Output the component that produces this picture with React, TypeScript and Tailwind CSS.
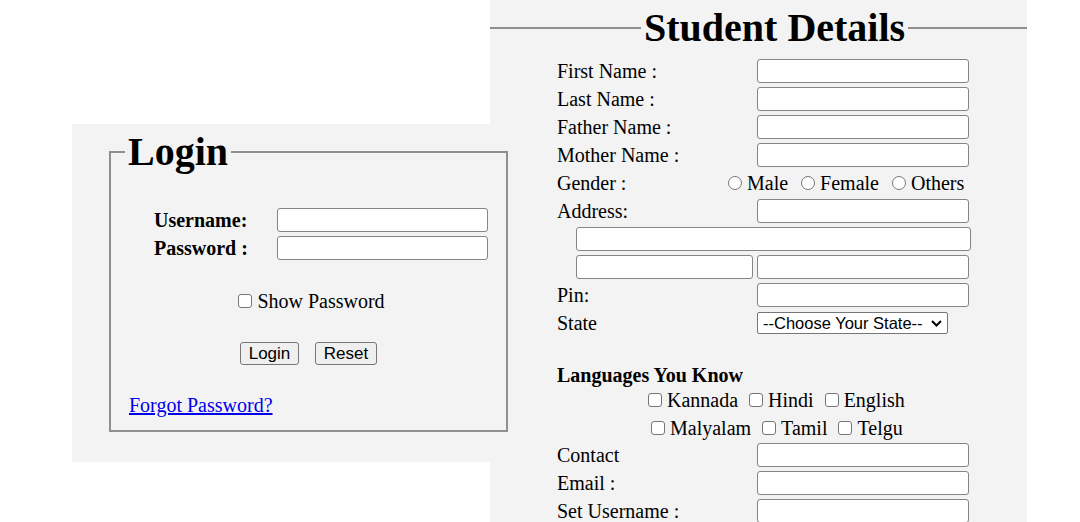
import React from 'react'

const serif = "font-['Liberation_Serif',serif]"
const sans = "font-['Liberation_Sans',Arial,sans-serif]"

function Input({ w = 'w-[212px]' }: { w?: string }) {
  return <div className={`${w} h-[24px] shrink-0 rounded-[3px] border border-[#858585] bg-white`} />
}

function Box({ round }: { round?: boolean }) {
  return (
    <span
      className={`inline-block w-[14px] h-[14px] shrink-0 border border-[#767676] bg-white ${
        round ? 'rounded-full' : 'rounded-[3px]'
      }`}
    />
  )
}

function Choice({ label, round }: { label: string; round?: boolean }) {
  return (
    <span className="flex items-center gap-[5px]">
      <Box round={round} />
      <span>{label}</span>
    </span>
  )
}

function Row({ label, children }: { label: string; children?: React.ReactNode }) {
  return (
    <div className="flex h-[24px] items-center">
      <span className="w-[200px] shrink-0">{label}</span>
      {children}
    </div>
  )
}

function Button({ children, w }: { children: React.ReactNode; w: string }) {
  return (
    <button
      className={`${sans} ${w} h-[23px] rounded-[3px] border border-[#767676] bg-[#efefef] text-[17px] leading-none text-black`}
    >
      {children}
    </button>
  )
}

function LoginPanel() {
  return (
    <div className={`${serif} relative z-10 mt-[124px] h-[338px] w-[436px] shrink-0 bg-[#f3f3f3] pl-[37px] pt-[5px] text-[20px] text-black`}>
      <fieldset className="h-[303px] w-[399px] border-2 border-[#8f8f8f]">
        <legend className="ml-[14px] px-[3px] text-[40px] font-bold leading-[46px]">Login</legend>
        <div className="mt-[33px] flex flex-col gap-[4px] pl-[43px]">
          <div className="flex h-[24px] items-center">
            <span className="w-[123px] font-bold">Username:</span>
            <Input w="w-[211px]" />
          </div>
          <div className="flex h-[24px] items-center">
            <span className="w-[123px] font-bold">Password :</span>
            <Input w="w-[211px]" />
          </div>
        </div>
        <div className="mt-[29px] flex h-[24px] items-center justify-center pl-[6px]">
          <Choice label="Show Password" />
        </div>
        <div className="mt-[29px] flex justify-center gap-[16px]">
          <Button w="w-[59px]">Login</Button>
          <Button w="w-[62px]">Reset</Button>
        </div>
        <div className="mt-[28px] h-[24px] pl-[18px] leading-[24px]">
          <a href="#" className="text-[#0000ee] underline">
            Forgot Password?
          </a>
        </div>
      </fieldset>
    </div>
  )
}

function StudentPanel() {
  return (
    <div className={`${serif} -ml-[18px] h-[522px] w-[537px] shrink-0 overflow-hidden bg-[#f3f3f3] text-[20px] leading-[24px] text-black`}>
      <div className="mt-[5px] flex h-[46px] items-center">
        <div className="h-[2px] w-[151px] bg-[#8f8f8f]" />
        <span className="px-[3px] text-[40px] font-bold leading-[46px]">Student Details</span>
        <div className="h-[2px] flex-1 bg-[#8f8f8f]" />
      </div>
      <div className="mt-[8px] flex flex-col gap-[4px] pl-[67px]">
        <Row label="First Name :"><Input /></Row>
        <Row label="Last Name :"><Input /></Row>
        <Row label="Father Name :"><Input /></Row>
        <Row label="Mother Name :"><Input /></Row>
        <div className="flex h-[24px] items-center">
          <span className="w-[171px] shrink-0">Gender :</span>
          <div className="flex items-center gap-[13px]">
            <Choice label="Male" round />
            <Choice label="Female" round />
            <Choice label="Others" round />
          </div>
        </div>
        <Row label="Address:"><Input /></Row>
        <div className="flex h-[24px] items-center pl-[19px]">
          <Input w="w-[395px]" />
        </div>
        <div className="flex h-[24px] items-center gap-[4px] pl-[19px]">
          <Input w="w-[177px]" />
          <Input />
        </div>
        <Row label="Pin:"><Input /></Row>
        <Row label="State">
          <div className={`${sans} flex h-[22px] w-[191px] items-center justify-between rounded-[2px] border border-[#767676] bg-white pl-[5px] pr-[5px] text-[16.5px]`}>
            <span>--Choose Your State--</span>
            <svg width="11" height="7" viewBox="0 0 11 7" className="mt-[1px]">
              <polyline points="1,1 5.5,5.5 10,1" fill="none" stroke="#000" strokeWidth="2" />
            </svg>
          </div>
        </Row>
        <div className="h-[20px]" />
        <div className="flex h-[24px] items-center font-bold">Languages You Know</div>
        <div className="-mt-[3px] flex h-[24px] items-center gap-[11px] pl-[91px]">
          <Choice label="Kannada" />
          <Choice label="Hindi" />
          <Choice label="English" />
        </div>
        <div className="flex h-[24px] items-center gap-[11px] pl-[94px]">
          <Choice label="Malyalam" />
          <Choice label="Tamil" />
          <Choice label="Telgu" />
        </div>
        <div className="-mt-[1px]">
          <Row label="Contact"><Input /></Row>
        </div>
        <Row label="Email :"><Input /></Row>
        <Row label="Set Username :"><Input /></Row>
      </div>
    </div>
  )
}

export default function App() {
  return (
    <div className="flex h-[522px] w-[1080px] overflow-hidden bg-white">
      <div className="w-[72px] shrink-0" />
      <LoginPanel />
      <StudentPanel />
    </div>
  )
}
